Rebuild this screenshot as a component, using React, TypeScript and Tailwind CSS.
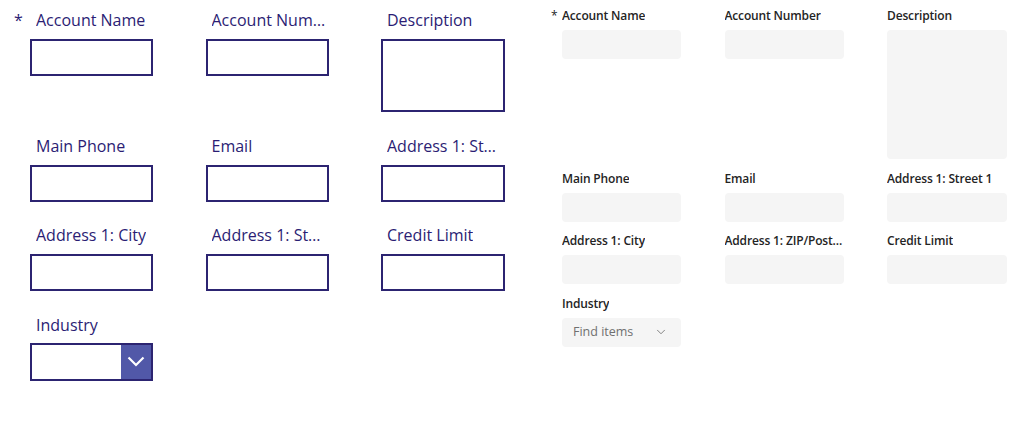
import { ChevronDown } from "lucide-react";

type Field = { label: string; tall?: boolean; required?: boolean; dropdown?: boolean };

const classicRows: Field[][] = [
  [{ label: "Account Name", required: true }, { label: "Account Number" }, { label: "Description", tall: true }],
  [{ label: "Main Phone" }, { label: "Email" }, { label: "Address 1: Street 1" }],
  [{ label: "Address 1: City" }, { label: "Address 1: State/Province" }, { label: "Credit Limit" }],
  [{ label: "Industry", dropdown: true }],
];

const modernRows: Field[][] = [
  [{ label: "Account Name", required: true }, { label: "Account Number" }, { label: "Description", tall: true }],
  [{ label: "Main Phone" }, { label: "Email" }, { label: "Address 1: Street 1" }],
  [{ label: "Address 1: City" }, { label: "Address 1: ZIP/Postal Code" }, { label: "Credit Limit" }],
  [{ label: "Industry", dropdown: true }],
];

function ClassicField({ field, last }: { field: Field; last: boolean }) {
  return (
    <div className="flex flex-col">
      {/* label */}
      <div
        className={`flex h-[25px] items-center pl-[6px] text-[16px] leading-[25px] text-[#2b1d74] ${last ? "pr-[6px]" : "pr-[1px]"}`}
      >
        {field.required && <span className="-ml-[22px] w-[22px] shrink-0 text-[16px]">*</span>}
        <span className="truncate">{field.label}</span>
      </div>
      {/* input */}
      {field.dropdown ? (
        <div className="mt-[5px] flex h-[38px] border-2 border-[#2c2471] bg-white">
          <div className="flex-1" />
          <div className="flex w-[30px] items-center justify-center bg-[#5158a8]">
            <svg width="18" height="11" viewBox="0 0 18 11" fill="none">
              <path d="M1.5 1.5 L9 9 L16.5 1.5" stroke="white" strokeWidth="2.2" />
            </svg>
          </div>
        </div>
      ) : (
        <div
          className={`mt-[6px] border-2 border-[#2c2471] bg-white ${field.tall ? "h-[73px]" : "h-[37px]"}`}
        />
      )}
    </div>
  );
}

function ModernField({ field }: { field: Field }) {
  return (
    <div className="flex flex-col">
      {/* label */}
      <div className="flex h-[16px] items-center text-[12px] font-semibold leading-[16px] tracking-[-0.15px] text-[#242424]">
        {field.required && <span className="-ml-[11px] w-[11px] shrink-0 font-normal">*</span>}
        <span className="truncate">{field.label}</span>
      </div>
      {/* input */}
      {field.dropdown ? (
        <div className="mt-[6px] flex h-[29px] items-center justify-between rounded-[4px] bg-[#f5f5f5] pl-[11px] pr-[13px]">
          <span className="text-[12.5px] text-[#707070]">Find items</span>
          <ChevronDown size={14} strokeWidth={1.3} className="text-[#616161]" />
        </div>
      ) : (
        <div className={`mt-[6px] rounded-[4px] bg-[#f5f5f5] ${field.tall ? "h-[129px]" : "h-[29px]"}`} />
      )}
    </div>
  );
}

export default function App() {
  return (
    <div className="flex h-[421px] w-[1021px] bg-white font-['Open_Sans',sans-serif]">
      {/* classic form */}
      <section className="w-[540px] pl-[30px] pt-[8px]">
        <div className="grid grid-cols-[123px_123px_124px] items-start gap-x-[52.5px] gap-y-[21.5px]">
          {classicRows.map((row, r) =>
            row.map((field, c) => <ClassicField key={`${r}-${c}`} field={field} last={c === 2} />)
          )}
        </div>
      </section>

      {/* modern form */}
      <section className="flex-1 pl-[22px] pt-[8px]">
        <div className="grid grid-cols-[119px_119px_120px] items-start gap-x-[43.5px] gap-y-[11.5px]">
          {modernRows.map((row, r) =>
            row.map((field, c) => <ModernField key={`${r}-${c}`} field={field} />)
          )}
        </div>
      </section>
    </div>
  );
}
